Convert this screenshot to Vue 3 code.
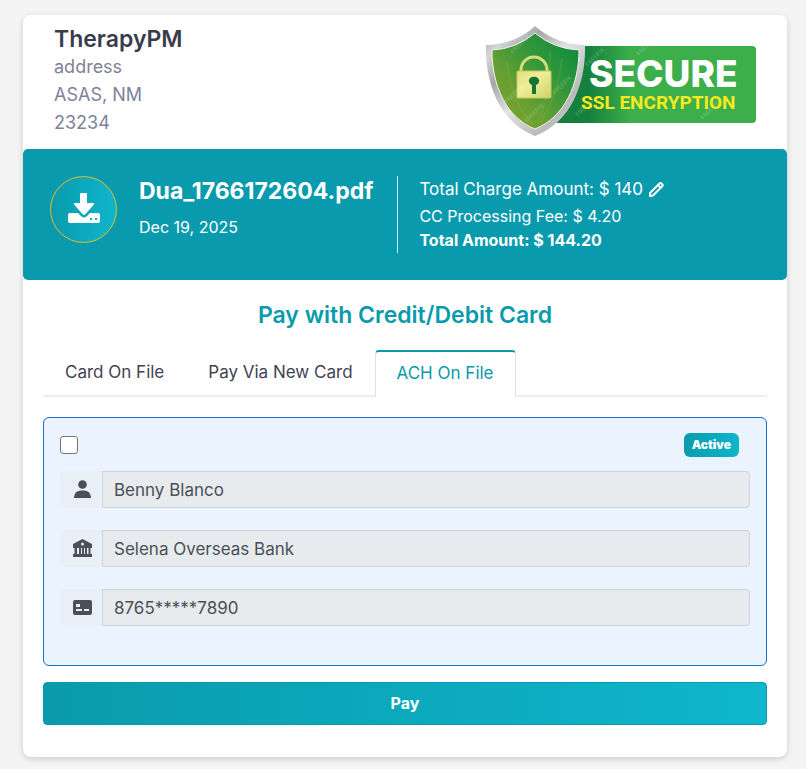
<script setup>
import { ref } from 'vue'

const tabs = ['Card On File', 'Pay Via New Card', 'ACH On File']
const activeTab = ref('ACH On File')
const selected = ref(false)

const account = ref({
    holder: 'Benny Blanco',
    bank: 'Selena Overseas Bank',
    number: '8765*****7890'
})

// start points of the diagonal marks on the SSL badge
const marks = [[28, 29], [22, 79], [70, 70], [42, 98], [103, 42], [154, 31], [93, 92], [218, 95]]
</script>

<template>
  <main class="page">
    <div class="invoice">
      <header class="header">
        <div class="practice">
          <h1>TherapyPM</h1>
          <p>address</p>
          <p>ASAS, NM</p>
          <p>23234</p>
        </div>
        <svg class="ssl" viewBox="0 0 272 112" role="img" aria-label="Secure SSL encryption">
          <defs>
            <linearGradient id="banner">
              <stop offset="0" stop-color="#14803d" />
              <stop offset="0.2" stop-color="#16813d" />
              <stop offset="0.4" stop-color="#3cae4a" />
              <stop offset="1" stop-color="#3cae4a" />
            </linearGradient>
            <linearGradient id="rim" x2="1" y2="1">
              <stop offset="0" stop-color="#a4a6a6" />
              <stop offset="0.15" stop-color="#d4d6d6" />
              <stop offset="0.3" stop-color="#a5a7a7" />
              <stop offset="0.5" stop-color="#e2e3e3" />
              <stop offset="0.75" stop-color="#b9bbbb" />
              <stop offset="1" stop-color="#d9dada" />
            </linearGradient>
            <linearGradient id="shield" x1="0" y1="1" x2="1" y2="0">
              <stop offset="0" stop-color="#86a82f" />
              <stop offset="0.35" stop-color="#669f32" />
              <stop offset="0.65" stop-color="#2f963a" />
              <stop offset="1" stop-color="#078a3e" />
            </linearGradient>
            <linearGradient id="lock" x2="1" y2="1">
              <stop offset="0" stop-color="#dfdf7c" />
              <stop offset="0.4" stop-color="#eeee99" />
              <stop offset="1" stop-color="#cfd36c" />
            </linearGradient>
          </defs>
          <rect x="62" y="21" width="209" height="77" rx="4" fill="url(#banner)" />
          <path d="M50 1 Q70 19 100 20 C101 57 87 97 50 111 C14 97 0 57 1 20 Q31 19 50 1Z" fill="url(#rim)" />
          <path d="M50 8 Q69 24 94 25 C94 59 80 92 50 104 C20 92 7 59 7 25 Q31 24 50 8Z" fill="url(#shield)" stroke="#f0f2ed" />
          <path d="M22 37 Q26 76 47 99 M77 34 Q73 70 55 98 M65 26 Q66 67 52 99" fill="none" stroke="#b0c54a" stroke-width="2" opacity="0.15" />
          <path d="M36 47 V45 A13 13 0 0 1 62 45 V47" fill="none" stroke="#d9dc7c" stroke-width="3" />
          <rect x="32" y="46" width="34" height="27" rx="1" fill="url(#lock)" stroke="#c9c85d" />
          <path d="M49 52 A4 4 0 0 1 51 60 V69 H47 V60 A4 4 0 0 1 49 52Z" fill="#167434" />
          <g class="watermark">
            <text
              v-for="[x, y] in marks"
              :key="`${x}-${y}`"
              :x="x"
              :y="y"
              :transform="`rotate(-45 ${x} ${y})`"
            >FREEPIK</text>
          </g>
          <text class="secure" x="104" y="62">SECURE</text>
          <text class="encryption" x="96" y="84">SSL ENCRYPTION</text>
        </svg>
      </header>

      <section class="summary">
        <button class="download" aria-label="Download">
          <svg viewBox="0 0 32 30" fill="#fff">
            <path d="M12 1 Q12 0 13 0 H18 Q19 0 19 1 V10 H25 Q27 10 25.500 12 L17.500 21 Q16 23 14.500 21 L6.500 12 Q5 10 7 10 H12Z" />
            <path fill-rule="evenodd" d="M2 20 H10 L13 23 Q16 26 19 23 L22 20 H30 Q32 20 32 22 V28 Q32 30 30 30 H2 Q0 30 0 28 V22 Q0 20 2 20Z M22 25 H24 V27 H22Z M27 25 H29 V27 H27Z" />
          </svg>
        </button>
        <div class="document">
          <h2>Dua_1766172604.pdf</h2>
          <p>Dec 19, 2025</p>
        </div>
        <div class="amounts">
          <p class="charge">
            Total Charge Amount: $ 140
            <button class="edit" aria-label="Edit amount">
              <svg viewBox="0 0 16 16" fill="none" stroke="#fff" stroke-width="2" stroke-linejoin="round">
                <path d="M2 15 L2 12 L11.500 2.500 Q12.500 1.500 13.500 2.500 L14.500 3.500 Q15 4.500 14 5.500 L5 14.500Z M10 4 L13 7" />
              </svg>
            </button>
          </p>
          <p>CC Processing Fee: $ 4.20</p>
          <p class="total">Total Amount: $ 144.20</p>
        </div>
      </section>

      <section class="payment">
        <h2>Pay with Credit/Debit Card</h2>
        <nav class="tabs" role="tablist">
          <button
            v-for="tab in tabs"
            :key="tab"
            role="tab"
            :aria-selected="activeTab === tab"
            :class="{ active: activeTab === tab }"
            @click="activeTab = tab"
          >{{ tab }}</button>
        </nav>

        <div class="account">
          <div class="account-top">
            <input v-model="selected" type="checkbox" aria-label="Use this account" />
            <span class="badge">Active</span>
          </div>
          <div class="field">
            <label for="holder" aria-label="Account holder">
              <svg viewBox="0 0 20 20" fill="currentColor">
                <circle cx="10.500" cy="4.500" r="4.300" />
                <path d="M2 18 V17 Q3 10.500 9 10.500 H12 Q18 10.500 19 17 V18Z" />
              </svg>
            </label>
            <input id="holder" :value="account.holder" type="text" disabled />
          </div>
          <div class="field">
            <label for="bank" aria-label="Bank name">
              <svg viewBox="0 0 20 20" fill="currentColor">
                <path fill-rule="evenodd" d="M1 5 L10.500 0 L20 5 V9 H18.500 V15 H20 V18 H1 V15 H2.500 V9 H1Z M10.500 3.500 A1.500 1.500 0 1 0 10.500 6.500 A1.500 1.500 0 1 0 10.500 3.500Z M5 9 V15 H7 V9Z M9 9 V15 H10 V9Z M12 9 V15 H13 V9Z M15 9 V15 H16.500 V9Z" />
              </svg>
            </label>
            <input id="bank" :value="account.bank" type="text" disabled />
          </div>
          <div class="field">
            <label for="number" aria-label="Account number">
              <svg viewBox="0 0 20 20" fill="currentColor">
                <path fill-rule="evenodd" d="M3 2 H18 Q20 2 20 4 V15 Q20 17 18 17 H3 Q1 17 1 15 V4 Q1 2 3 2Z M4 6 V9 H8 V6Z M4 11 V13 H10 V11Z M12 11 V13 H17 V11Z" />
              </svg>
            </label>
            <input id="number" :value="account.number" type="text" disabled />
          </div>
        </div>

        <button class="pay">Pay</button>
      </section>
    </div>
  </main>
</template>

<style>
body {
    margin: 0;
    background: #f4f4f4;
}
</style>

<style scoped>
* {
    box-sizing: border-box;
}

.page {
    padding: 15px 19px 12px 23px;
    color: #3f4254;
    font-family: Inter, "Open Sans", sans-serif;
    font-size: 16px;
    line-height: 24px;
}

h1, h2, p {
    margin: 0;
}

button, input {
    margin: 0;
    font: inherit;
}

button {
    padding: 0;
    border: 0;
    cursor: pointer;
}

svg {
    display: block;
}

.invoice {
    background: #fff;
    border-radius: 8px;
    box-shadow: 0 2px 6px rgba(0, 0, 0, 0.16);
}

.header {
    display: flex;
    justify-content: space-between;
    padding: 10px 30px 12px 31px;
}

.practice h1 {
    color: #3a3c4c;
    font-size: 23px;
    font-weight: 600;
    line-height: 28px;
}

.practice p {
    color: #7e8299;
    font-size: 18px;
    line-height: 28px;
}

.ssl {
    width: 272px;
    height: 112px;
}

.ssl text {
    font-family: Inter, sans-serif;
}

.ssl .secure {
    fill: #fff;
    font-size: 37px;
    font-weight: 800;
}

.ssl .encryption {
    fill: #f4ea20;
    font-family: Roboto, sans-serif;
    font-size: 19px;
    font-weight: 700;
}

.ssl .watermark text {
    fill: #fff;
    font-size: 6px;
    opacity: 0.25;
}

.summary {
    display: flex;
    align-items: flex-start;
    min-height: 131px;
    padding: 27px;
    background: #099bad;
    border-radius: 5px;
    color: #fff;
}

.download {
    display: flex;
    flex: none;
    align-items: center;
    justify-content: center;
    width: 67px;
    height: 67px;
    padding-bottom: 4px;
    border: 1px solid #e7bd27;
    border-radius: 50%;
    background: linear-gradient(90deg, #099bad, #0fb6cc);
}

.download svg {
    width: 32px;
    height: 30px;
}

.document {
    margin-left: 22px;
    padding-right: 24px;
}

.document h2 {
    font-size: 23px;
    font-weight: 700;
    line-height: 30px;
}

.document p {
    margin-top: 9px;
}

.amounts {
    min-height: 77px;
    padding-left: 21px;
    border-left: 1px solid #d4f0f3;
}

.charge {
    display: flex;
    align-items: center;
    gap: 5px;
    margin: 1px 0 3px;
    font-size: 17px;
}

.edit {
    background: none;
}

.edit svg {
    width: 16px;
    height: 16px;
}

.total {
    font-weight: 700;
}

.payment {
    padding: 20px 20px 32px;
}

.payment h2 {
    color: #099bad;
    font-size: 23px;
    font-weight: 600;
    line-height: 30px;
    text-align: center;
}

.tabs {
    display: flex;
    height: 47px;
    margin: 20px 0;
    border-bottom: 2px solid #ebedf9;
}

.tabs button {
    height: 47px;
    padding: 0 21px 4px;
    border: 1px solid transparent;
    background: transparent;
    color: #3f4254;
    font-size: 17px;
}

.tabs .active {
    border-color: #dee2e6;
    border-top: 2px solid #099bad;
    border-bottom: 0;
    border-radius: 4px 4px 0 0;
    background: #fff;
    color: #099bad;
}

.account {
    padding: 15px 16px 39px;
    border: 1px solid #1670d0;
    border-radius: 6px;
    background: #ebf3ff;
}

.account-top {
    display: flex;
    align-items: center;
    justify-content: space-between;
    height: 24px;
    margin-bottom: 14px;
    padding-right: 11px;
}

.account-top input {
    appearance: none;
    width: 18px;
    height: 18px;
    border: 1px solid #767676;
    border-radius: 3px;
    background: #fff;
}

.account-top input:checked {
    background: #099bad;
}

.badge {
    padding: 0 8px;
    border-radius: 6px;
    background: linear-gradient(90deg, #099bad, #0fb6cc);
    color: #fff;
    font-size: 12px;
    font-weight: 900;
}

.field {
    display: flex;
    height: 37px;
}

.field + .field {
    margin-top: 22px;
}

.field label {
    display: flex;
    flex: none;
    align-items: center;
    width: 42px;
    padding-left: 12px;
    border-radius: 5px 0 0 5px;
    background: #e9eff6;
    color: #495057;
}

.field svg {
    width: 20px;
    height: 20px;
}

.field input {
    flex: 1;
    min-width: 0;
    padding: 0 11px;
    border: 1px solid #ced4da;
    border-radius: 0 4px 4px 0;
    background: #e8ebed;
    color: #495057;
    font-size: 17px;
}

.pay {
    display: block;
    width: 100%;
    height: 43px;
    margin-top: 16px;
    padding-bottom: 2px;
    border: 1px solid #099bad;
    border-radius: 4px;
    background: linear-gradient(90deg, #099bad, #0fb6cc);
    color: #fff;
    font-weight: 700;
}
</style>
